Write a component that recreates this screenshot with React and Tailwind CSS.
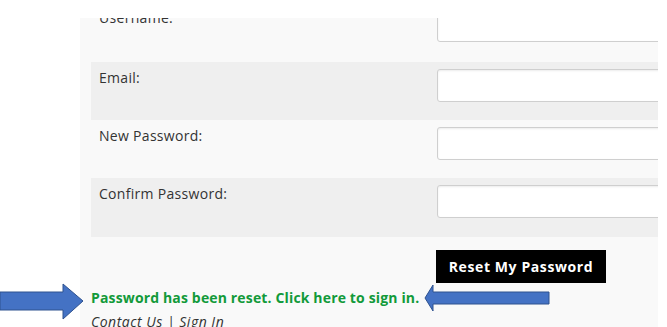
import React from "react";

const rows = [
  { label: "Username:", h: "h-[60px]", extra: "-mt-[16px]" },
  { label: "Email:", h: "h-[58px]", extra: "bg-[#efefef]" },
  { label: "New Password:", h: "h-[58px]", extra: "" },
  { label: "Confirm Password:", h: "h-[59px]", extra: "bg-[#efefef]" },
];

function Row({ label, h, extra }) {
  return (
    <div className={`flex ${h} ${extra}`}>
      <div className="w-[346px] shrink-0 pl-[8px] pt-[6px] text-[14px] leading-[20px] tracking-[0.3px] text-[#333]">
        {label}
      </div>
      <div className="mt-[7px] h-[33px] w-[260px] shrink-0 rounded-[3px] border border-[#cfcfcf] bg-white shadow-[inset_0_1px_2px_rgba(0,0,0,0.08)]" />
    </div>
  );
}

export default function App() {
  return (
    <div
      className="relative h-[327px] w-[667px] overflow-hidden bg-white"
      style={{ fontFamily: '"Open Sans", "Liberation Sans", sans-serif' }}
    >
      <div className="h-[18px]" />
      <div className="ml-[80px] h-[309px] w-[578px] overflow-hidden bg-[#f9f9f9] pl-[11px]">
        {rows.map((r) => (
          <Row key={r.label} {...r} />
        ))}
        <div className="pl-[345px] pt-[13px]">
          <button className="flex h-[33px] w-[170px] items-center justify-center bg-black text-[14px] font-bold tracking-[0.6px] text-white">
            Reset My Password
          </button>
        </div>
        <p className="mt-[5px] text-[14px] font-bold leading-[20px] tracking-[0.15px] text-[#129a3a]">
          Password has been reset. Click here to sign in.
        </p>
        <p className="mt-[4px] text-[14px] italic leading-[20px] tracking-[0.5px] text-[#333]">
          Contact Us | Sign In
        </p>
      </div>
      <svg
        className="pointer-events-none absolute left-0 top-0"
        width="667"
        height="327"
        viewBox="0 0 667 327"
      >
        <polygon
          points="0,292 63,292 63,284 83,301 63,319 63,310 0,310"
          fill="#4472c4"
          stroke="#2f528f"
          strokeWidth="1"
        />
        <polygon
          points="425,298 433,285 433,292 549,292 549,304 433,304 433,311"
          fill="#4472c4"
          stroke="#2f528f"
          strokeWidth="1"
        />
      </svg>
    </div>
  );
}
